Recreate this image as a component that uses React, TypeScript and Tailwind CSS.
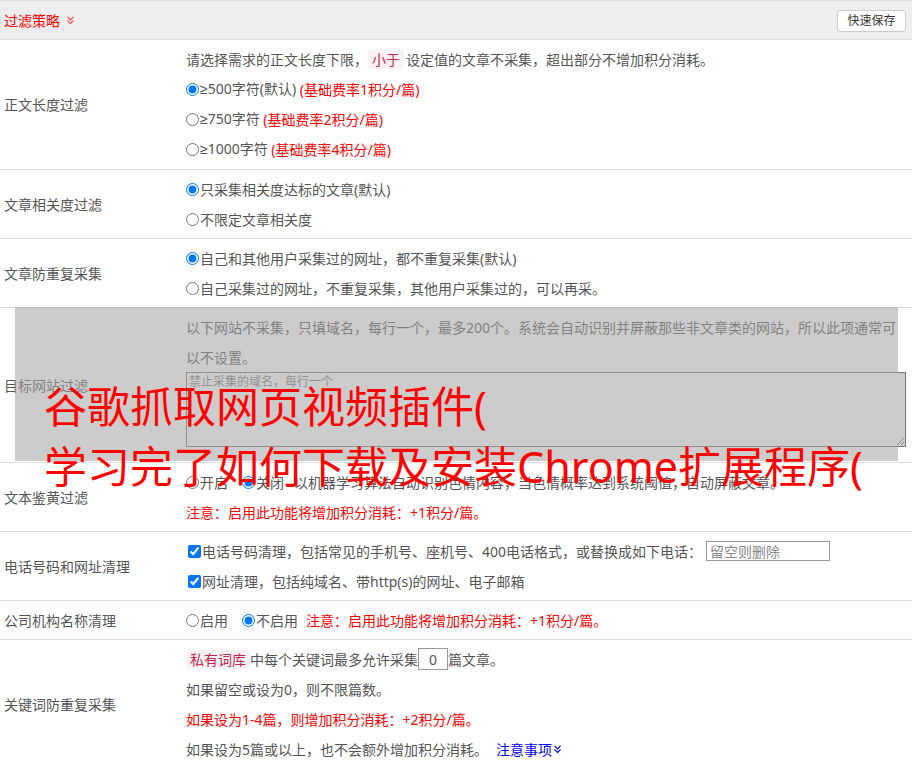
import React from "react";

const Chev = ({ color }: { color: string }) => (
  <svg width="9" height="9" viewBox="0 0 9 9" fill="none" stroke={color} strokeWidth="1.2" className="inline-block">
    <polyline points="1.5,1 4.5,4 7.5,1" />
    <polyline points="1.5,4.5 4.5,7.5 7.5,4.5" />
  </svg>
);

function Row({ label, children, pb = "pb-[4px]" }: { label: string; children: React.ReactNode; pb?: string }) {
  return (
    <div className="grid grid-cols-[186px_1fr] border-b border-[#ddd]">
      <div className="flex items-center pl-[4px]">{label}</div>
      <div className={"pt-[4px] pr-[4px] " + pb}>{children}</div>
    </div>
  );
}

const Line = ({ children, className = "" }: { children: React.ReactNode; className?: string }) => (
  <div className={"h-[30px] flex items-center whitespace-nowrap " + className}>{children}</div>
);

const Radio = ({ name, checked }: { name: string; checked?: boolean }) => (
  <input type="radio" name={name} defaultChecked={checked} className="m-0 mr-px w-[13px] h-[13px] shrink-0" />
);

const Check = () => (
  <input type="checkbox" defaultChecked className="m-0 ml-[2px] mr-px w-[13px] h-[13px] shrink-0" />
);

const Badge = ({ children }: { children: React.ReactNode }) => (
  <span className="bg-[#f9f2f4] text-[#c7254e] rounded-[4px] px-[4px] h-[19px] flex items-center">{children}</span>
);

const Ge = () => <span className="font-['Liberation_Sans']">≥</span>;

export default function App() {
  return (
    <div
      className="relative w-[912px] h-[768px] overflow-hidden bg-white text-[14px] text-[#555]"
      style={{ fontFamily: '"Noto Sans", "Noto Sans CJK SC", sans-serif' }}
    >
      <div className="h-[40px] bg-[#eee] border-t border-b border-[#ddd] flex items-center justify-between pl-[4px] pr-[6px]">
        <div className="flex items-center gap-[6px] text-[#f00]">
          <span>过滤策略</span>
          <Chev color="#f55" />
        </div>
        <button className="h-[22px] w-[69px] bg-white border border-[#ccc] rounded-[3px] text-[12px] text-[#333] flex items-center justify-center mt-[2px]">
          快速保存
        </button>
      </div>

      <Row label="正文长度过滤" pb="pb-[5px]">
        <Line>
          <span>请选择需求的正文长度下限，</span>
          <Badge>小于</Badge>
          <span className="ml-[2px]">设定值的文章不采集，超出部分不增加积分消耗。</span>
        </Line>
        <Line>
          <Radio name="len" checked />
          <span><Ge />500字符(默认)&nbsp;</span>
          <span className="text-[#f00]">(基础费率1积分/篇)</span>
        </Line>
        <Line>
          <Radio name="len" />
          <span><Ge />750字符&nbsp;</span>
          <span className="text-[#f00]">(基础费率2积分/篇)</span>
        </Line>
        <Line>
          <Radio name="len" />
          <span><Ge />1000字符&nbsp;</span>
          <span className="text-[#f00]">(基础费率4积分/篇)</span>
        </Line>
      </Row>

      <Row label="文章相关度过滤">
        <Line>
          <Radio name="rel" checked />
          <span>只采集相关度达标的文章(默认)</span>
        </Line>
        <Line>
          <Radio name="rel" />
          <span>不限定文章相关度</span>
        </Line>
      </Row>

      <Row label="文章防重复采集">
        <Line>
          <Radio name="dup" checked />
          <span>自己和其他用户采集过的网址，都不重复采集(默认)</span>
        </Line>
        <Line>
          <Radio name="dup" />
          <span>自己采集过的网址，不重复采集，其他用户采集过的，可以再采。</span>
        </Line>
      </Row>

      <Row label="目标网站过滤">
        <Line>以下网站不采集，只填域名，每行一个，最多200个。系统会自动识别并屏蔽那些非文章类的网站，所以此项通常可</Line>
        <Line>以不设置。</Line>
        <textarea
          placeholder="禁止采集的域名，每行一个"
          className="block w-[720px] h-[75px] mb-[11px] border border-[#777] bg-white text-[12px] px-[2px] py-[1px] leading-[16px] placeholder-[#777] resize"
        />
      </Row>

      <Row label="文本鉴黄过滤">
        <Line>
          <Radio name="porn" />
          <span>开启</span>
          <span className="w-[14px]" />
          <Radio name="porn" checked />
          <span>关闭</span>
          <span className="ml-[10px]">以机器学习算法自动识别色情内容，当色情概率达到系统阈值，自动屏蔽文章。</span>
        </Line>
        <Line className="text-[#f00]">注意：启用此功能将增加积分消耗：+1积分/篇。</Line>
      </Row>

      <Row label="电话号码和网址清理">
        <Line>
          <Check />
          <span>电话号码清理，包括常见的手机号、座机号、400电话格式，或替换成如下电话：</span>
          <input
            placeholder="留空则删除"
            className="ml-[4px] w-[124px] h-[20px] border border-[#999] px-[3px] text-[14px] placeholder-[#888] outline-none"
          />
        </Line>
        <Line>
          <Check />
          <span>网址清理，包括纯域名、带http(s)的网址、电子邮箱</span>
        </Line>
      </Row>

      <Row label="公司机构名称清理">
        <Line>
          <Radio name="org" />
          <span>启用</span>
          <span className="w-[14px]" />
          <Radio name="org" checked />
          <span>不启用</span>
          <span className="ml-[8px] text-[#f00]">注意：启用此功能将增加积分消耗：+1积分/篇。</span>
        </Line>
      </Row>

      <Row label="关键词防重复采集">
        <Line>
          <Badge>私有词库</Badge>
          <span>中每个关键词最多允许采集</span>
          <input
            defaultValue="0"
            className="w-[30px] h-[22px] border border-[#999] text-center text-[14px] outline-none"
          />
          <span>篇文章。</span>
        </Line>
        <Line>如果留空或设为0，则不限篇数。</Line>
        <Line className="text-[#f00]">如果设为1-4篇，则增加积分消耗：+2积分/篇。</Line>
        <Line>
          <span>如果设为5篇或以上，也不会额外增加积分消耗。</span>
          <span className="ml-[8px] text-[#00f] flex items-center gap-[1px]">
            注意事项
            <Chev color="#00f" />
          </span>
        </Line>
      </Row>

      {/* gray overlay */}
      <div className="absolute left-[15px] top-[307px] w-[883px] h-[154px] bg-[rgba(163,163,163,0.55)] pointer-events-none" />
      <div className="absolute left-[898px] top-[373px] w-[7px] h-[73px] bg-[rgba(163,163,163,0.55)] pointer-events-none" />

      {/* big red caption */}
      <div
        className="absolute left-[44px] top-[377px] text-[#f00] text-[43px] leading-[60px] whitespace-nowrap pointer-events-none"
        style={{ fontFamily: '"Noto Sans", "Noto Sans CJK SC", sans-serif' }}
      >
        <div>谷歌抓取网页视频插件(</div>
        <div>学习完了如何下载及安装Chrome扩展程序(</div>
      </div>
    </div>
  );
}
